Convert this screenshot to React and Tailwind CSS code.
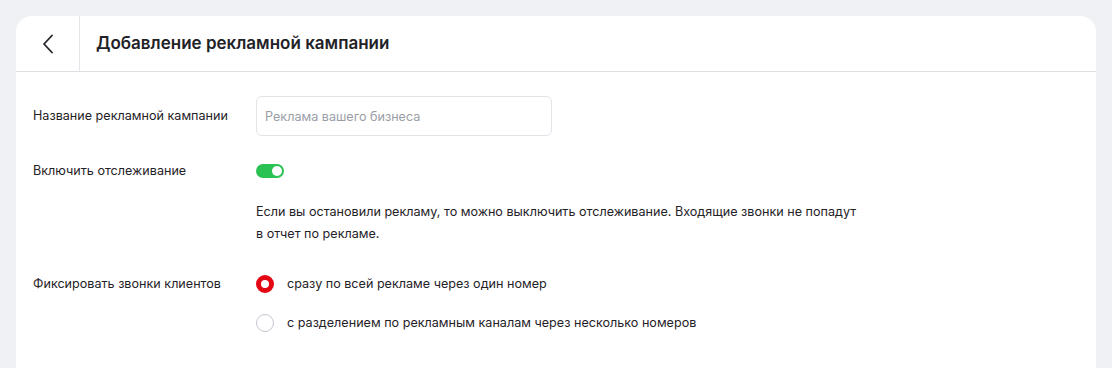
import { useState } from 'react';

function Radio({ checked, label, onClick }) {
    return (
        <button type="button" onClick={onClick} className="flex items-center h-[22px] text-left">
            {checked ? (
                <span className="w-[18px] h-[18px] rounded-full border-[5px] border-[#e30613] bg-white shrink-0" />
            ) : (
                <span className="w-[18px] h-[18px] rounded-full border border-[#c3c7d0] bg-white shrink-0" />
            )}
            <span className="ml-[13px] text-[12.6px] text-[#1f2227]">{label}</span>
        </button>
    );
}

export default function App() {
    const [tracking, setTracking] = useState(true);
    const [mode, setMode] = useState('single');

    return (
        <div className="min-h-[368px] bg-[#f0f1f5] pt-4 px-4 font-['Inter',sans-serif] text-[#1f2227]">
            <div className="bg-white rounded-t-2xl min-h-[352px]">
                {/* header */}
                <div className="flex h-[56px] border-b border-[#dedfe3]">
                    <button type="button" className="w-16 flex items-center justify-center border-r border-[#e3e4ea]">
                        <svg width="12" height="20" viewBox="0 0 12 20" fill="none">
                            <path d="M10 1.5L2 10l8 8.5" stroke="#1f2227" strokeWidth="1.8" strokeLinecap="round" strokeLinejoin="round" />
                        </svg>
                    </button>
                    <h1 className="pl-4 flex items-center text-[17px] font-semibold">
                        Добавление рекламной кампании
                    </h1>
                </div>

                {/* form */}
                <div className="px-[17px] pt-6">
                    <div className="flex items-center">
                        <div className="w-[223px] text-[12.6px]">Название рекламной кампании</div>
                        <input
                            type="text"
                            placeholder="Реклама вашего бизнеса"
                            className="w-[296px] h-[40px] rounded-md border border-[#e1e3e8] px-2 text-[12.6px] placeholder:text-[#9a9ea7] outline-none"
                        />
                    </div>

                    <div className="flex items-center mt-[25px] h-5">
                        <div className="w-[223px] text-[12.6px]">Включить отслеживание</div>
                        <button
                            type="button"
                            onClick={() => setTracking(!tracking)}
                            className={`w-[28px] h-[14px] rounded-full flex items-center px-[2px] ${tracking ? 'bg-[#2bc254] justify-end' : 'bg-[#c9ccd3] justify-start'}`}
                        >
                            <span className="w-[10px] h-[10px] rounded-full bg-white" />
                        </button>
                    </div>

                    <p className="ml-[223px] mt-[20px] w-[610px] text-[12.6px] leading-[22px]">
                        Если вы остановили рекламу, то можно выключить отслеживание. Входящие звонки не попадут в отчет по рекламе.
                    </p>

                    <div className="flex mt-[28px]">
                        <div className="w-[223px] text-[12.6px] leading-[22px]">Фиксировать звонки клиентов</div>
                        <div className="flex flex-col gap-[17px]">
                            <Radio checked={mode === 'single'} onClick={() => setMode('single')} label="сразу по всей рекламе через один номер" />
                            <Radio checked={mode === 'multi'} onClick={() => setMode('multi')} label="с разделением по рекламным каналам через несколько номеров" />
                        </div>
                    </div>
                </div>
            </div>
        </div>
    );
}
